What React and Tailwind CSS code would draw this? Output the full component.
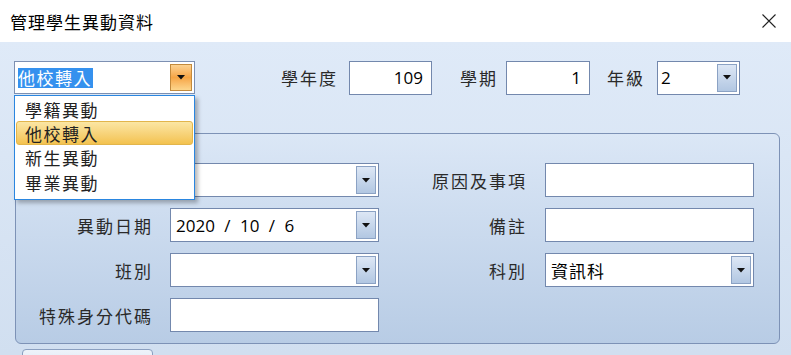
import React from "react";

const LBL = "text-[17px] tracking-[2px] text-[#2a2a2a] leading-none whitespace-nowrap";

function Arrow() {
  return (
    <svg width="8" height="5" viewBox="0 0 8 5" className="block">
      <path d="M0 0 H8 L4 4.5 Z" fill="#111" />
    </svg>
  );
}

function BlueBtn() {
  return (
    <div className="absolute right-[2px] top-[2px] bottom-[2px] w-[20px] border border-[#8ba2c4] bg-gradient-to-b from-[#dde7f5] to-[#b2c7e2] flex items-center justify-center">
      <Arrow />
    </div>
  );
}

function Field({ w = "w-[209px]", children, combo = false, align = "left" }) {
  return (
    <div
      className={`relative ${w} h-[34px] bg-white border border-[#7388ad] flex items-center ${
        align === "right" ? "justify-end pr-[8px]" : "pl-[5px]"
      }`}
    >
      {children}
      {combo && <BlueBtn />}
    </div>
  );
}

function Row({ left, leftField, right, rightField }) {
  return (
    <div className="flex items-center h-[34px]">
      <div className="w-[137px] flex justify-end">{left && <span className={LBL}>{left}</span>}</div>
      <div className="ml-[17px]">{leftField}</div>
      <div className="w-[148px] flex justify-end">{right && <span className={LBL}>{right}</span>}</div>
      <div className="ml-[18px]">{rightField}</div>
    </div>
  );
}

const VAL = "text-[17px] text-black leading-none font-['Open_Sans','Noto_Sans_CJK_TC',sans-serif]";

export default function App() {
  return (
    <div className="w-[791px] h-[355px] overflow-hidden bg-white font-['Noto_Sans_CJK_TC',sans-serif]">
      {/* title bar */}
      <div className="h-[42px] flex items-center justify-between pl-[10px] pr-[14px] bg-white">
        <span className="text-[17px] text-black tracking-[1px] leading-none">管理學生異動資料</span>
        <svg width="14" height="14" viewBox="0 0 14 14" className="mr-[1px]">
          <path d="M0.5 0.5 L13.5 13.5 M13.5 0.5 L0.5 13.5" stroke="#222" strokeWidth="1.1" />
        </svg>
      </div>

      {/* body */}
      <div className="h-[313px] bg-gradient-to-b from-[#dfeaf8] to-[#d1dff0] pt-[19px] pl-[14px]">
        {/* top row */}
        <div className="flex items-center h-[33px]">
          <div className="relative w-[181px] h-[33px] bg-white border border-[#7d90b2] flex items-center pl-[3px]">
            <span className="bg-[#3591ee] text-white text-[17px] tracking-[1.5px] leading-[20px] h-[20px] pr-[1px]">他校轉入</span>
            <div className="absolute right-[2px] top-[2px] bottom-[2px] w-[22px] border border-[#c38a3c] bg-gradient-to-b from-[#fcd290] via-[#f6a544] to-[#fcd68c] flex items-center justify-center">
              <Arrow />
            </div>
            {/* dropdown list */}
            <div className="absolute left-[-1px] top-[33px] w-[181px] h-[105px] bg-white border border-[#2a86e0] shadow-[3px_3px_4px_rgba(0,0,0,0.28)] z-10 pt-[1px] px-[1px]">
              <div className="h-[24px] flex items-center pl-[9px] text-[17px] tracking-[1.5px] text-[#222] leading-none">學籍異動</div>
              <div className="h-[24px] flex items-center pl-[8px] text-[17px] tracking-[1.5px] text-[#222] leading-none rounded-[3px] border border-[#e2b54c] bg-gradient-to-b from-[#fbe6a3] to-[#f3c24e]">他校轉入</div>
              <div className="h-[25px] flex items-center pl-[9px] text-[17px] tracking-[1.5px] text-[#222] leading-none">新生異動</div>
              <div className="h-[25px] flex items-center pl-[9px] text-[17px] tracking-[1.5px] text-[#222] leading-none">畢業異動</div>
            </div>
          </div>

          <span className={`${LBL} ml-[86px]`}>學年度</span>
          <div className="ml-[11px]">
            <Field w="w-[83px]" align="right">
              <span className={VAL}>109</span>
            </Field>
          </div>
          <span className={`${LBL} ml-[28px]`}>學期</span>
          <div className="ml-[8px]">
            <Field w="w-[84px]" align="right">
              <span className={VAL}>1</span>
            </Field>
          </div>
          <span className={`${LBL} ml-[17px]`}>年級</span>
          <div className="ml-[12px]">
            <div className="relative w-[83px] h-[34px] bg-white border border-[#7388ad] flex items-center pl-[3px]">
              <span className={VAL}>2</span>
              <BlueBtn />
            </div>
          </div>
        </div>

        {/* group box */}
        <div className="ml-[1px] mt-[39px] w-[765px] h-[211px] rounded-[6px] border border-[#7d92b6] bg-gradient-to-b from-[#dbe7f6] to-[#b8cce5] pt-[29px] flex flex-col gap-[11px]">
          <Row
            leftField={<Field combo />}
            right="原因及事項"
            rightField={<Field />}
          />
          <Row
            left="異動日期"
            leftField={
              <Field combo>
                <span className={`${VAL} whitespace-pre [word-spacing:5px]`}>2020 / 10 / 6</span>
              </Field>
            }
            right="備註"
            rightField={<Field />}
          />
          <Row
            left="班別"
            leftField={<Field combo />}
            right="科別"
            rightField={
              <Field combo>
                <span className="text-[17px] text-black tracking-[1px] leading-none">資訊科</span>
              </Field>
            }
          />
          <Row left="特殊身分代碼" leftField={<Field />} />
        </div>

        {/* bottom button (partially visible) */}
        <div className="ml-[8px] mt-[5px] w-[131px] h-[30px] rounded-[4px] border border-[#8a9fc0] bg-gradient-to-b from-[#eef3fa] to-[#d4e0f0]" />
      </div>
    </div>
  );
}
